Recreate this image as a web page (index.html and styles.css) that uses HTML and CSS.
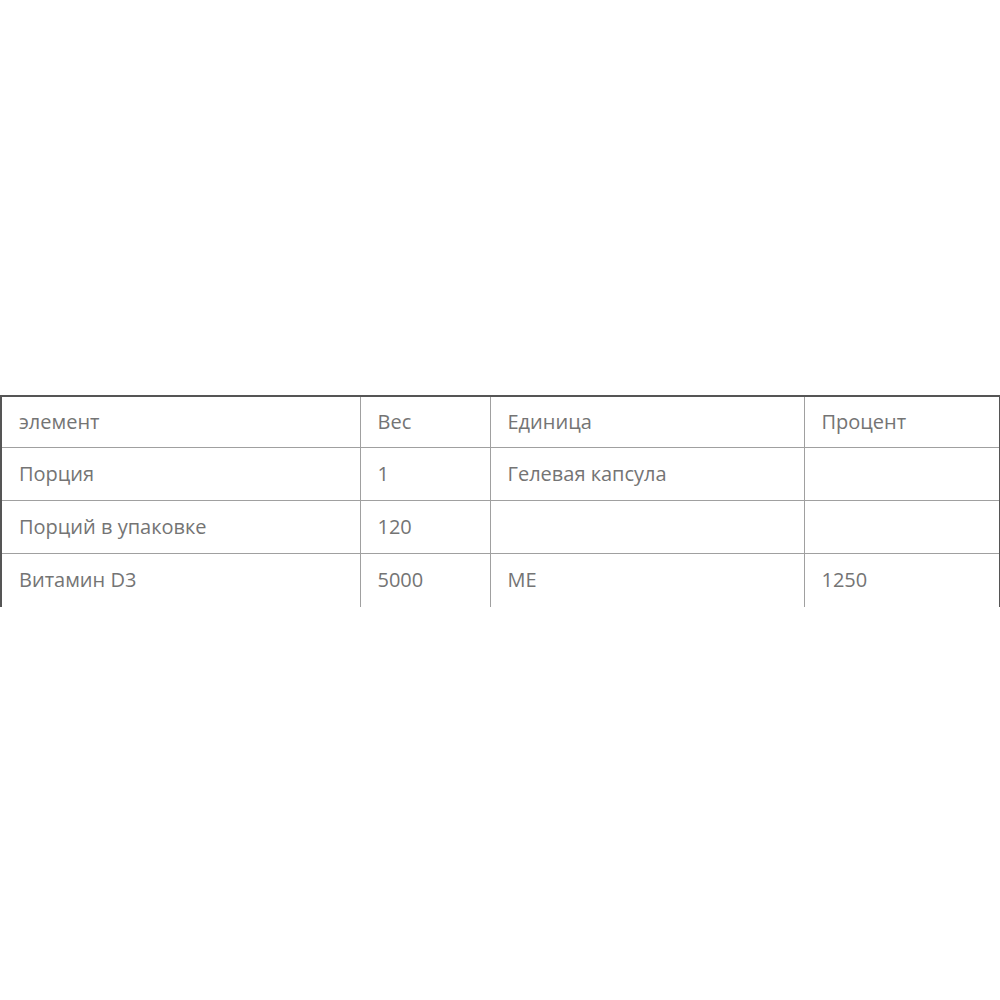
FILE: index.html
```html
<!DOCTYPE html>
<html lang="ru">
<head>
<meta charset="utf-8">
<link rel="stylesheet" href="styles.css">
</head>
<body>
<div class="page">
  <table class="facts">
    <colgroup>
      <col class="c1"><col class="c2"><col class="c3"><col class="c4">
    </colgroup>
    <tr><td>элемент</td><td>Вес</td><td>Единица</td><td>Процент</td></tr>
    <tr><td>Порция</td><td>1</td><td>Гелевая капсула</td><td></td></tr>
    <tr><td>Порций в упаковке</td><td>120</td><td></td><td></td></tr>
    <tr class="last"><td>Витамин D3</td><td>5000</td><td>МЕ</td><td>1250</td></tr>
  </table>
</div>
</body>
</html>
```
FILE: styles.css
```css
html, body {
  margin: 0;
  padding: 0;
  background: #fff;
}
.page {
  padding-top: 395px;
}
.facts {
  width: 999px;
  border-collapse: collapse;
  table-layout: fixed;
  font-family: "Open Sans", "Liberation Sans", sans-serif;
  font-size: 20px;
  color: #747474;
  border-top: 2px solid #555;
  border-left: 2px solid #555;
  border-right: 2px solid #555;
}
.c1 { width: 359px; }
.c2 { width: 130px; }
.c3 { width: 314px; }
.c4 { width: 196px; }
.facts td {
  height: 52px;
  padding: 0 17px 1px;
  border: 1px solid #a0a0a0;
  vertical-align: middle;
  box-sizing: border-box;
  white-space: nowrap;
}
.facts tr:first-child td { border-top: 2px solid #555; height: 51px; padding-bottom: 0; }
.facts tr:nth-child(2) td { height: 53px; }
.facts tr:nth-child(3) td { height: 53px; }
.facts td:first-child { border-left: 2px solid #555; }
.facts td:last-child { border-right: 2px solid #555; }
.facts tr.last td { border-bottom: none; height: 54px; }
```
